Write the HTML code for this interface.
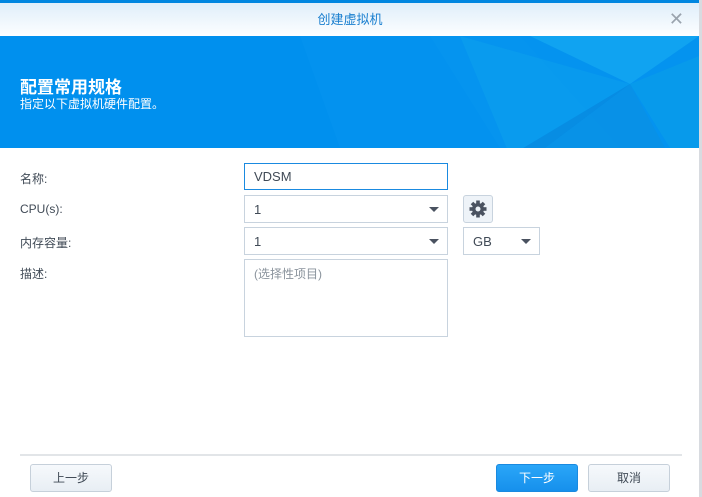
<!DOCTYPE html>
<html><head><meta charset="utf-8"><style>
*{box-sizing:border-box;margin:0;padding:0}
body{width:702px;height:497px;overflow:hidden;background:#fff;font-family:"Liberation Sans","Noto Sans CJK SC",sans-serif;font-size:12px;color:#404a56;position:relative}
.a{position:absolute}
.top{left:0;top:0;width:702px;height:3px;background:#0086e0}
.title{left:0;top:3px;width:700px;height:33px;background:linear-gradient(#dfeefa,#fdfeff);text-align:center;line-height:33px;color:#1a7fcf;font-size:13px}
.x{right:18px;top:3px;line-height:33px;color:#9aa3ad;font-size:18px}
.edge{right:0;top:0;width:3px;height:497px;background:#d8dbe0}
.banner{left:0;top:36px;width:699px;height:112px;background:#0090ee;overflow:hidden}
.h1{left:20px;top:73px;color:#fff;font-size:17px;font-weight:bold}
.h2{left:20px;top:95px;color:#fff;font-size:12px}
.lbl{left:20px;font-size:12px;color:#404a56}
.box{border:1px solid #c8d3de;background:#fff;padding-left:9px;font-size:13px;color:#404a56;display:flex;align-items:center}
.arr{position:absolute;right:8px;top:11px;width:0;height:0;border-left:5px solid transparent;border-right:5px solid transparent;border-top:5px solid #4a5260}
.btn{top:464px;height:28px;border:1px solid #c6d0da;border-radius:3px;background:linear-gradient(#f6f9fc,#e8eef4);text-align:center;line-height:26px;font-size:12px;color:#404a56}
</style></head><body>
<div class="a top"></div>
<div class="a title">创建虚拟机</div>
<div class="a x">✕</div>
<div class="a edge"></div>
<div class="a banner">
<svg width="699" height="112" style="position:absolute;left:0;top:0">
<polygon points="300,0 520,0 620,112 340,112" fill="#0895f0" opacity=".4"/>
<polygon points="430,0 699,0 699,112 500,112" fill="#0a98f0" opacity=".4"/>
<polygon points="530,0 699,0 630,48" fill="#19aef2" opacity=".6"/>
<polygon points="630,48 699,20 699,112 670,112" fill="#0a9ee8" opacity=".6"/>
<polygon points="460,0 630,48 510,120" fill="#12a8ee" opacity=".35"/>
<polygon points="450,112 510,120 630,48 545,112" fill="#0a86d8" opacity=".5"/>
<polygon points="545,112 630,48 665,112" fill="#0c90e0" opacity=".5"/>
</svg>
</div>
<div class="a h1">配置常用规格</div>
<div class="a h2">指定以下虚拟机硬件配置。</div>
<div class="a lbl" style="top:170px">名称:</div>
<div class="a lbl" style="top:202px">CPU(s):</div>
<div class="a lbl" style="top:234px">内存容量:</div>
<div class="a lbl" style="top:265px">描述:</div>
<div class="a box" style="left:244px;top:163px;width:204px;height:27px;border-color:#1a8ae0">VDSM</div>
<div class="a box" style="left:244px;top:195px;width:204px;height:28px">1<span class="arr"></span></div>
<div class="a box" style="left:244px;top:227px;width:204px;height:28px">1<span class="arr"></span></div>
<div class="a box" style="left:244px;top:259px;width:204px;height:78px;align-items:flex-start;padding-top:5px;color:#8a939c;font-size:12px">(选择性项目)</div>
<div class="a" style="left:463px;top:195px;width:30px;height:28px;border:1px solid #c8d3de;border-radius:3px;background:#eef3f8">
<svg width="28" height="26" viewBox="0 0 28 26"><g transform="translate(14,13)" fill="#4a5260"><circle r="6"/><rect x="-1.8" y="-8.5" width="3.6" height="17"/><rect x="-1.8" y="-8.5" width="3.6" height="17" transform="rotate(45)"/><rect x="-1.8" y="-8.5" width="3.6" height="17" transform="rotate(90)"/><rect x="-1.8" y="-8.5" width="3.6" height="17" transform="rotate(135)"/><circle r="2.5" fill="#eef3f8"/></g></svg></div>
<div class="a box" style="left:463px;top:227px;width:77px;height:28px">GB<span class="arr"></span></div>
<div class="a" style="left:20px;top:454px;width:662px;height:2px;background:#e2e5e8"></div>
<div class="a btn" style="left:30px;width:82px">上一步</div>
<div class="a btn" style="left:496px;width:82px;background:linear-gradient(#2aa6f8,#1690ec);border-color:#1a8ae0;color:#fff">下一步</div>
<div class="a btn" style="left:588px;width:82px">取消</div>
</body></html>
